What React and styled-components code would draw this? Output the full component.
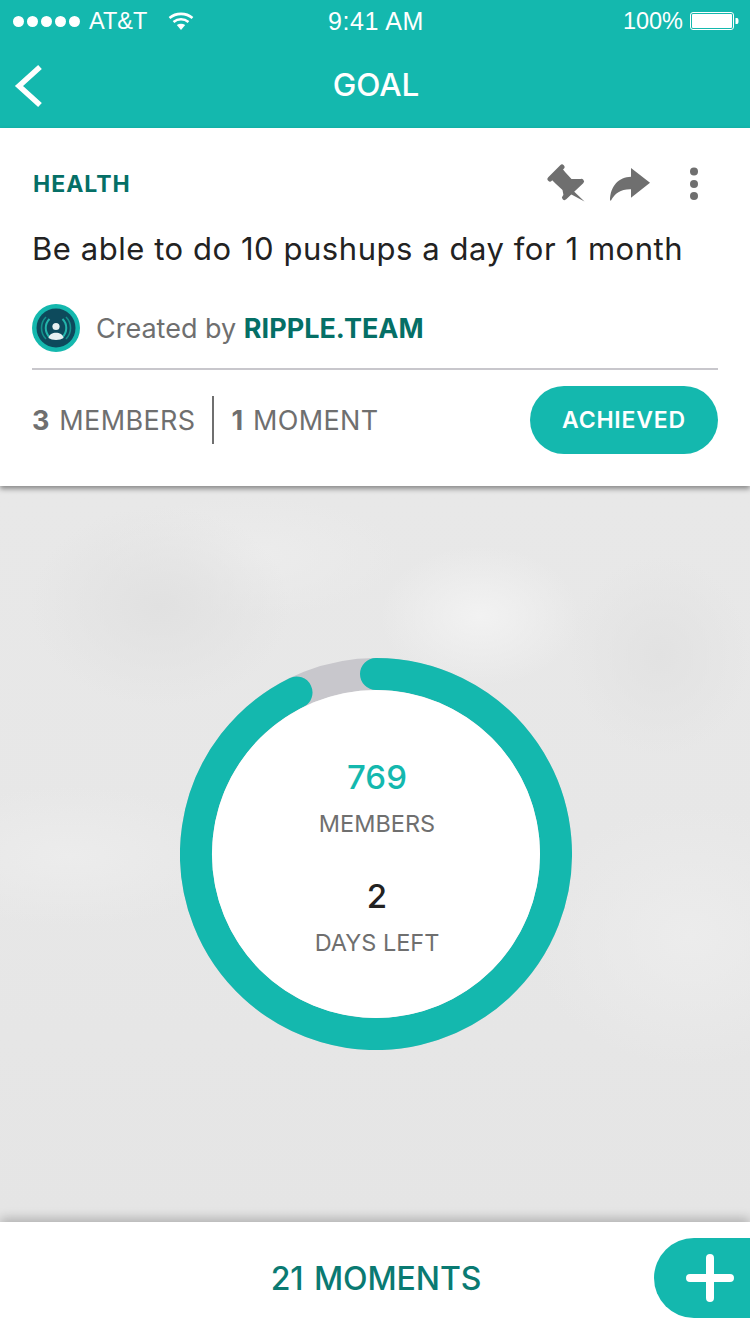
// Goal detail screen
import styled, { createGlobalStyle } from "styled-components";

const TEAL = "#14b8ae";
const DARK_TEAL = "#056f66";
const GREY = "#6f6f6f";
const FONT = `Inter, "Noto Sans", sans-serif`;

const GlobalStyle = createGlobalStyle`
    html, body {
        margin: 0;
        padding: 0;
        background: #fff;
    }
    * {
        box-sizing: border-box;
    }
`;

const Stat = ({ count, label }) => (
    <StatText><b>{count}</b> {label}</StatText>
);

const BatteryIcon = () => (
    <svg width="49" height="20" viewBox="0 0 49 20">
        <rect x="0.5" y="1.5" width="43" height="17" rx="2.5" fill="none" stroke="#fff" />
        <rect x="2" y="3" width="40" height="14" rx="1" fill="#fff" />
        <path d="M45.5 7 H47 C48 7 48.5 8 48.5 10 C48.5 12 48 13 47 13 H45.5 Z" fill="#fff" />
    </svg>
);

const WifiIcon = () => (
    <svg width="26" height="18" viewBox="0 0 26 18">
        <path d="M1.5 6 C8 0.5 18 0.5 24.5 6" fill="none" stroke="#fff" strokeWidth="2.6" />
        <path d="M5.5 10 C10 6.4 16 6.4 20.5 10" fill="none" stroke="#fff" strokeWidth="2.6" />
        <path d="M8.8 13 C11.5 11.2 14.5 11.2 17.2 13 L13 18 Z" fill="#fff" />
    </svg>
);

const PinIcon = () => (
    <svg width="40" height="40" viewBox="0 0 40 40">
        {/* head, then shaft flaring out to the collar, then the needle */}
        <path d="M3 15 L15 3" stroke={GREY} strokeWidth="5" strokeLinecap="round" />
        <path d="M14 3 L18.5 8.5 L24.5 15 L35 15 L17 34 L15.5 26 L9 20 L3 14 Z" fill={GREY} />
        <path d="M34.5 17.5 L17.5 33.5" stroke={GREY} strokeWidth="5" strokeLinecap="round" />
        <path d="M26.5 27 L37.5 37.5 L23.5 30 Z" fill={GREY} />
    </svg>
);

const ShareIcon = () => (
    <svg width="42" height="36" viewBox="0 0 42 36">
        <path d="M22 2 L41 16.7 L22 31.7 V23.3 C12 23 6 27 2 34.5 L1 34.5 C1 20 10 11 22 10.7 Z" fill={GREY} />
    </svg>
);

const MoreIcon = () => (
    <svg width="10" height="36" viewBox="0 0 10 36">
        <circle cx="5" cy="5.5" r="4" fill={GREY} />
        <circle cx="5" cy="18" r="4" fill={GREY} />
        <circle cx="5" cy="30" r="4" fill={GREY} />
    </svg>
);

const RippleLogo = () => (
    <svg width="48" height="48" viewBox="0 0 48 48">
        <circle cx="24" cy="24" r="24" fill={TEAL} />
        <circle cx="24" cy="24" r="19.5" fill="#0d4a5c" />
        <path d="M14 13 C8 19 8 29 14 35 M34 13 C40 19 40 29 34 35" fill="none" stroke="#14928c" strokeWidth="1.6" />
        <path d="M17.5 15 C12.5 20 12.5 28 17.5 33 M30.5 15 C35.5 20 35.5 28 30.5 33" fill="none" stroke="#23b5ab" strokeWidth="2" />
        <circle cx="24" cy="22.5" r="3.6" fill="#e6f0f1" />
        <path d="M16.5 34 C17.5 27 30.5 27 31.5 34 C28 36.5 20 36.5 16.5 34 Z" fill="#e6f0f1" />
    </svg>
);

const ProgressRing = () => (
    <RingSvg width="392" height="392" viewBox="0 0 392 392">
        <circle cx="196" cy="196" r="180" fill="none" stroke="#c8c7cc" strokeWidth="32" />
        {/* runs clockwise from twelve o'clock round to the gap */}
        <path
            d="M196 16 A180 180 0 1 1 116.5 34.5"
            fill="none"
            stroke={TEAL}
            strokeWidth="32"
            strokeLinecap="round"
        />
    </RingSvg>
);

export default function App() {
    return (
        <Screen>
            <GlobalStyle />
            <Header>
                <StatusBar>
                    <StatusLeft>
                        <Signal>
                            {[0, 1, 2, 3, 4].map((i) => <SignalDot key={i} />)}
                        </Signal>
                        <span>AT&amp;T</span>
                        <WifiSlot><WifiIcon /></WifiSlot>
                    </StatusLeft>
                    <StatusTime>9:41 AM</StatusTime>
                    <StatusRight>
                        <span>100%</span>
                        <BatteryIcon />
                    </StatusRight>
                </StatusBar>
                <NavBar>
                    <BackButton>
                        <svg width="30" height="44" viewBox="0 0 30 44">
                            <path d="M26 3 L5 22 L26 41" fill="none" stroke="#fff" strokeWidth="5.5" />
                        </svg>
                    </BackButton>
                    <NavTitle>GOAL</NavTitle>
                </NavBar>
            </Header>

            <Card>
                <CardTop>
                    <Category>HEALTH</Category>
                    <Actions>
                        <PinIcon />
                        <ShareIcon />
                        <MoreSlot><MoreIcon /></MoreSlot>
                    </Actions>
                </CardTop>
                <GoalTitle>Be able to do 10 pushups a day for 1 month</GoalTitle>
                <CreatorRow>
                    <RippleLogo />
                    <CreatedBy>Created by <strong>RIPPLE.TEAM</strong></CreatedBy>
                </CreatorRow>
                <StatsRow>
                    <Stat count="3" label="MEMBERS" />
                    <StatDivider />
                    <Stat count="1" label="MOMENT" />
                    <AchievedButton>ACHIEVED</AchievedButton>
                </StatsRow>
            </Card>

            <Body>
                <RingWrap>
                    <ProgressRing />
                    <RingCenter>
                        <BigNumber $accent>769</BigNumber>
                        <RingLabel>MEMBERS</RingLabel>
                        <BigNumber>2</BigNumber>
                        <RingLabel>DAYS LEFT</RingLabel>
                    </RingCenter>
                </RingWrap>
            </Body>

            <Footer>
                <MomentsCount>21 MOMENTS</MomentsCount>
                <AddButton>
                    <svg width="48" height="48" viewBox="0 0 48 48">
                        <path d="M24 4 V44 M4 24 H44" stroke="#fff" strokeWidth="8" strokeLinecap="round" />
                    </svg>
                </AddButton>
            </Footer>
        </Screen>
    );
}

const Screen = styled.div`
    width: 750px;
    height: 1334px;
    display: flex;
    flex-direction: column;
    overflow: hidden;
    font-family: ${FONT};
    background: #fff;
`;

const Header = styled.header`
    height: 128px;
    background: ${TEAL};
    color: #fff;
    flex: none;
`;

const StatusBar = styled.div`
    height: 40px;
    display: grid;
    grid-template-columns: 1fr auto 1fr;
    align-items: center;
    padding: 2px 11px 0 13px;
    font-family: "Liberation Sans", Arial, sans-serif;
    font-size: 23.5px;
`;

const StatusLeft = styled.div`
    display: flex;
    align-items: center;
`;

const Signal = styled.div`
    display: flex;
    gap: 3px;
    margin-right: 9px;
`;

const SignalDot = styled.i`
    display: block;
    width: 11px;
    height: 11px;
    border-radius: 50%;
    background: #fff;
`;

const WifiSlot = styled.span`
    display: flex;
    margin-left: 21px;
`;

const StatusTime = styled.div`
    font-size: 25px;
    letter-spacing: 0.6px;
`;

const StatusRight = styled.div`
    display: flex;
    align-items: center;
    justify-content: flex-end;
    gap: 7px;
`;

const NavBar = styled.nav`
    position: relative;
    height: 88px;
    display: flex;
    align-items: center;
    justify-content: center;
    padding-top: 1px;
`;

const BackButton = styled.div`
    position: absolute;
    left: 14px;
    top: 24px;
    display: flex;
`;

const NavTitle = styled.h1`
    margin: 0 0 0 2px;
    font-size: 31.5px;
    font-weight: 500;
`;

const Card = styled.section`
    position: relative;
    z-index: 2;
    flex: none;
    height: 358px;
    padding: 0 32px;
    background: #fff;
    box-shadow: 0 3px 5px rgba(0, 0, 0, 0.4);
`;

const CardTop = styled.div`
    height: 88px;
    padding-top: 24px;
    display: flex;
    align-items: center;
    justify-content: space-between;
`;

const Category = styled.div`
    margin-left: 1px;
    font-size: 23px;
    font-weight: 700;
    letter-spacing: 1px;
    color: ${DARK_TEAL};
`;

const Actions = styled.div`
    display: flex;
    align-items: center;
    gap: 22px;
    margin-right: 19px;
`;

const MoreSlot = styled.span`
    display: flex;
    margin-left: 16px;
`;

const GoalTitle = styled.div`
    margin-top: 13px;
    font-size: 31px;
    line-height: 40px;
    letter-spacing: 0.55px;
    color: #222;
    white-space: nowrap;
`;

const CreatorRow = styled.div`
    margin-top: 35px;
    padding-bottom: 16px;
    display: flex;
    align-items: center;
    gap: 16px;
    border-bottom: 2px solid #c8c7cc;
`;

const CreatedBy = styled.div`
    font-size: 27px;
    color: ${GREY};

    strong {
        font-weight: 700;
        color: ${DARK_TEAL};
    }
`;

const StatsRow = styled.div`
    height: 100px;
    display: flex;
    align-items: center;
`;

const StatText = styled.div`
    font-size: 27px;
    letter-spacing: 0.35px;
    word-spacing: 1.6px;
    color: ${GREY};

    b {
        font-weight: 700;
    }
`;

const StatDivider = styled.div`
    width: 2px;
    height: 48px;
    margin: 0 17px;
    background: ${GREY};
`;

const AchievedButton = styled.button`
    margin-left: auto;
    width: 188px;
    height: 68px;
    border: 0;
    border-radius: 34px;
    background: ${TEAL};
    color: #fff;
    font-family: ${FONT};
    font-size: 23px;
    font-weight: 600;
    letter-spacing: 0.8px;
`;

const Body = styled.main`
    flex: 1;
    display: flex;
    align-items: center;
    justify-content: center;
    padding-left: 2px;
    background:
        radial-gradient(ellipse 100px 70px at 480px 130px, #f2f2f2, rgba(242, 242, 242, 0)),
        radial-gradient(ellipse 130px 100px at 160px 120px, #e1e1e1, rgba(225, 225, 225, 0)),
        radial-gradient(ellipse 90px 100px at 660px 170px, #e2e2e2, rgba(226, 226, 226, 0)),
        radial-gradient(ellipse 160px 70px at 70px 370px, #ececec, rgba(236, 236, 236, 0)),
        radial-gradient(ellipse 160px 130px at 690px 450px, #ececec, rgba(236, 236, 236, 0)),
        radial-gradient(ellipse 150px 60px at 250px 70px, #ececec, rgba(236, 236, 236, 0)),
        linear-gradient(#e8e8e8, #e7e7e7 50%, #e5e5e5);
`;

const RingWrap = styled.div`
    display: grid;
    width: 392px;
    height: 392px;

    & > * {
        grid-area: 1 / 1;
    }
`;

const RingSvg = styled.svg`
    display: block;
`;

const RingCenter = styled.div`
    margin: 32px;
    border-radius: 50%;
    background: #fff;
    display: flex;
    flex-direction: column;
    align-items: center;
    padding: 67px 0 0 2px;
`;

const BigNumber = styled.div`
    font-size: 33px;
    line-height: 40px;
    font-weight: 500;
    color: ${(p) => (p.$accent ? TEAL : "#222")};
`;

const RingLabel = styled.div`
    font-size: 23.5px;
    line-height: 28px;
    margin: 13px 0 38px;
    color: ${GREY};
`;

const Footer = styled.footer`
    position: relative;
    z-index: 2;
    flex: none;
    height: 112px;
    padding-left: 2px;
    background: #fff;
    box-shadow: 0 -4px 10px rgba(0, 0, 0, 0.22);
    display: flex;
    align-items: center;
    justify-content: center;
`;

const MomentsCount = styled.div`
    font-size: 32px;
    font-weight: 500;
    word-spacing: 2px;
    letter-spacing: -0.1px;
    color: #0a7a72;
`;

const AddButton = styled.div`
    position: absolute;
    right: 0;
    top: 16px;
    width: 96px;
    height: 80px;
    padding-left: 32px;
    border-radius: 40px 0 0 40px;
    background: ${TEAL};
    display: flex;
    align-items: center;
`;
